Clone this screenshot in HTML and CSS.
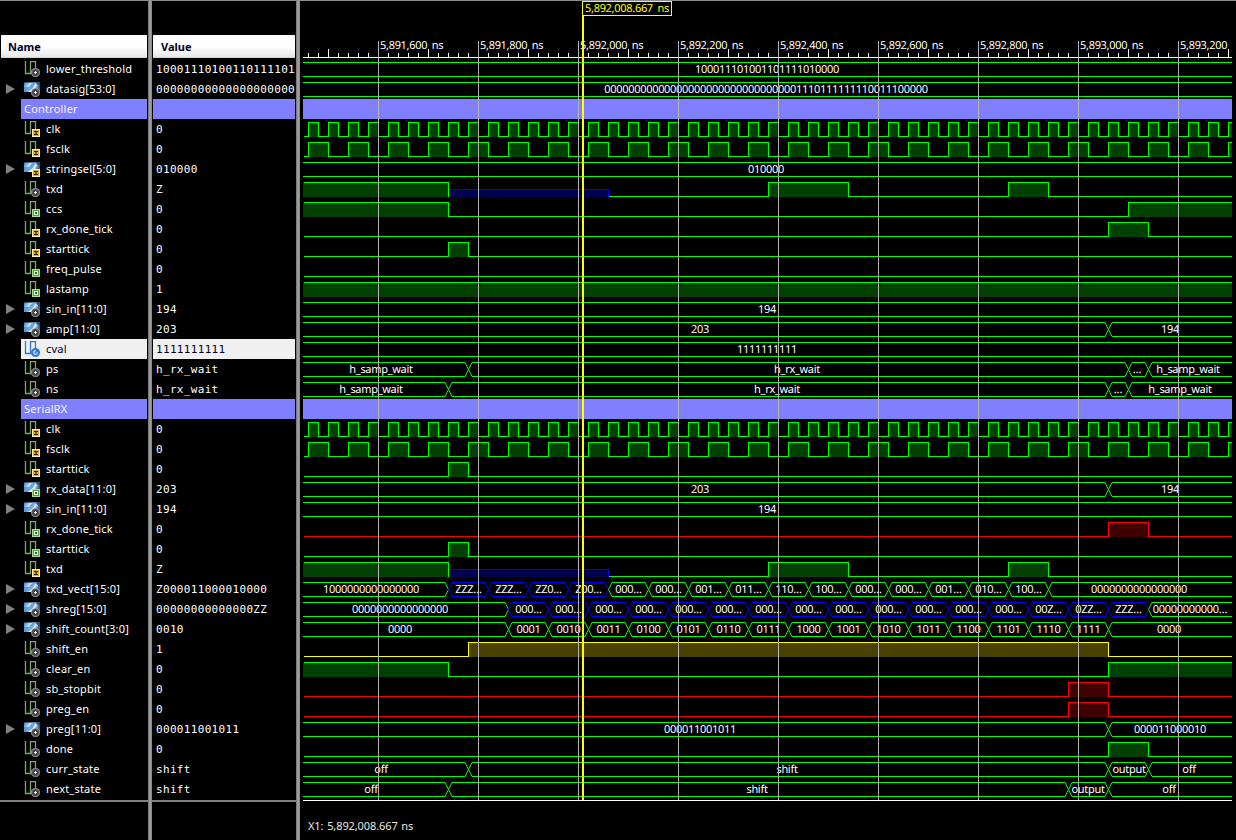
FILE: index.html
```html
<!DOCTYPE html>
<html lang="en">
<head>
<meta charset="utf-8">
<title>Waveform viewer</title>
<link rel="stylesheet" href="styles.css">
</head>
<body>
<svg class="defs" width="0" height="0" aria-hidden="true">
  <defs>
    <linearGradient id="bus-grad" x1="0" y1="0" x2="1" y2="0.3">
      <stop offset="0" stop-color="#2f7fd0"/>
      <stop offset="0.45" stop-color="#e8f4ff"/>
      <stop offset="0.7" stop-color="#ffffff"/>
      <stop offset="1" stop-color="#1f64b0"/>
    </linearGradient>
    <radialGradient id="gear-grad">
      <stop offset="0" stop-color="#ffffff"/>
      <stop offset="0.26" stop-color="#e8e8e8"/>
      <stop offset="0.32" stop-color="#303030"/>
      <stop offset="0.75" stop-color="#5c5c5c"/>
      <stop offset="1" stop-color="#b0b0b0"/>
    </radialGradient>
    <g id="wire"><path d="M1.5 0V12.5H6.5V0.5H11.5V10" fill="none" stroke="#7aa86a" stroke-width="1.3"/></g>
    <g id="buswire"><path d="M0 1.5H16V11H0Z" fill="url(#bus-grad)"/><path d="M0 6H5L8 1.5H12L9 7L4 11H0Z" fill="#3c8ddc" opacity="0.75"/><path d="M11 1.5H16V6L14 4Z" fill="#17528f"/></g>
    <g id="b-gear"><circle cx="11.5" cy="11.5" r="4.5" fill="url(#gear-grad)"/></g>
    <g id="b-i"><rect x="8" y="8" width="8" height="8" fill="#e5aa2a"/><rect x="8.5" y="8.5" width="7" height="7" fill="none" stroke="#fff0a8" stroke-width="1"/><rect x="10" y="10" width="4" height="1" fill="#222"/><rect x="11.5" y="10" width="1" height="4" fill="#222"/><rect x="10" y="13" width="4" height="1" fill="#222"/></g>
    <g id="b-o"><rect x="8" y="8" width="8" height="8" fill="#4f9f3a"/><rect x="8.5" y="8.5" width="7" height="7" fill="none" stroke="#a8e090" stroke-width="1"/><rect x="10" y="10" width="4" height="4" fill="#e8ffe0"/><rect x="11" y="11" width="2" height="2" fill="#2c6a20"/></g>
    <g id="b-c"><circle cx="11.5" cy="11.5" r="4.5" fill="#2f78d8"/><circle cx="11.5" cy="11.5" r="1.8" fill="none" stroke="#fff" stroke-width="1.1" stroke-dasharray="8 3"/></g>
    <symbol id="s-gear" viewBox="0 0 16 16"><use href="#wire"/><use href="#b-gear"/></symbol>
    <symbol id="s-i" viewBox="0 0 16 16"><use href="#wire"/><use href="#b-i"/></symbol>
    <symbol id="s-o" viewBox="0 0 16 16"><use href="#wire"/><use href="#b-o"/></symbol>
    <symbol id="s-c" viewBox="0 0 16 16"><path d="M1.5 0V12.5H6.5V0.5H11.5V10" fill="none" stroke="#2f78c8" stroke-width="1.3"/><use href="#b-c"/></symbol>
    <symbol id="v-gear" viewBox="0 0 16 16"><use href="#buswire"/><use href="#b-gear"/></symbol>
    <symbol id="v-i" viewBox="0 0 16 16"><use href="#buswire"/><use href="#b-i"/></symbol>
    <symbol id="v-o" viewBox="0 0 16 16"><use href="#buswire"/><use href="#b-o"/></symbol>
  </defs>
</svg>

<main class="viewer">
  <section class="pane name-pane">
    <header class="col-head">Name</header>
    <ul class="rows">
      <li class="row"><svg class="ic"><use href="#s-gear"/></svg><span>lower_threshold</span></li>
      <li class="row"><i class="exp"></i><svg class="ic"><use href="#v-gear"/></svg><span>datasig[53:0]</span></li>
      <li class="row group"><span>Controller</span></li>
      <li class="row"><svg class="ic"><use href="#s-i"/></svg><span>clk</span></li>
      <li class="row"><svg class="ic"><use href="#s-i"/></svg><span>fsclk</span></li>
      <li class="row"><i class="exp"></i><svg class="ic"><use href="#v-i"/></svg><span>stringsel[5:0]</span></li>
      <li class="row"><svg class="ic"><use href="#s-gear"/></svg><span>txd</span></li>
      <li class="row"><svg class="ic"><use href="#s-o"/></svg><span>ccs</span></li>
      <li class="row"><svg class="ic"><use href="#s-i"/></svg><span>rx_done_tick</span></li>
      <li class="row"><svg class="ic"><use href="#s-i"/></svg><span>starttick</span></li>
      <li class="row"><svg class="ic"><use href="#s-o"/></svg><span>freq_pulse</span></li>
      <li class="row"><svg class="ic"><use href="#s-o"/></svg><span>lastamp</span></li>
      <li class="row"><i class="exp"></i><svg class="ic"><use href="#v-gear"/></svg><span>sin_in[11:0]</span></li>
      <li class="row"><i class="exp"></i><svg class="ic"><use href="#v-gear"/></svg><span>amp[11:0]</span></li>
      <li class="row selected"><svg class="ic"><use href="#s-c"/></svg><span>cval</span></li>
      <li class="row"><svg class="ic"><use href="#s-gear"/></svg><span>ps</span></li>
      <li class="row"><svg class="ic"><use href="#s-gear"/></svg><span>ns</span></li>
      <li class="row group"><span>SerialRX</span></li>
      <li class="row"><svg class="ic"><use href="#s-i"/></svg><span>clk</span></li>
      <li class="row"><svg class="ic"><use href="#s-i"/></svg><span>fsclk</span></li>
      <li class="row"><svg class="ic"><use href="#s-i"/></svg><span>starttick</span></li>
      <li class="row"><i class="exp"></i><svg class="ic"><use href="#v-o"/></svg><span>rx_data[11:0]</span></li>
      <li class="row"><i class="exp"></i><svg class="ic"><use href="#v-gear"/></svg><span>sin_in[11:0]</span></li>
      <li class="row"><svg class="ic"><use href="#s-o"/></svg><span>rx_done_tick</span></li>
      <li class="row"><svg class="ic"><use href="#s-o"/></svg><span>starttick</span></li>
      <li class="row"><svg class="ic"><use href="#s-i"/></svg><span>txd</span></li>
      <li class="row"><i class="exp"></i><svg class="ic"><use href="#v-gear"/></svg><span>txd_vect[15:0]</span></li>
      <li class="row"><i class="exp"></i><svg class="ic"><use href="#v-gear"/></svg><span>shreg[15:0]</span></li>
      <li class="row"><i class="exp"></i><svg class="ic"><use href="#v-gear"/></svg><span>shift_count[3:0]</span></li>
      <li class="row"><svg class="ic"><use href="#s-gear"/></svg><span>shift_en</span></li>
      <li class="row"><svg class="ic"><use href="#s-gear"/></svg><span>clear_en</span></li>
      <li class="row"><svg class="ic"><use href="#s-gear"/></svg><span>sb_stopbit</span></li>
      <li class="row"><svg class="ic"><use href="#s-gear"/></svg><span>preg_en</span></li>
      <li class="row"><i class="exp"></i><svg class="ic"><use href="#v-gear"/></svg><span>preg[11:0]</span></li>
      <li class="row"><svg class="ic"><use href="#s-gear"/></svg><span>done</span></li>
      <li class="row"><svg class="ic"><use href="#s-gear"/></svg><span>curr_state</span></li>
      <li class="row"><svg class="ic"><use href="#s-gear"/></svg><span>next_state</span></li>
    </ul>
    <div class="pane-foot"></div>
  </section>

  <div class="divider"></div>

  <section class="pane value-pane">
    <header class="col-head">Value</header>
    <ul class="rows">
      <li class="row"><span>10001110100110111101</span></li>
      <li class="row"><span>00000000000000000000</span></li>
      <li class="row group"></li>
      <li class="row"><span>0</span></li>
      <li class="row"><span>0</span></li>
      <li class="row"><span>010000</span></li>
      <li class="row"><span>Z</span></li>
      <li class="row"><span>0</span></li>
      <li class="row"><span>0</span></li>
      <li class="row"><span>0</span></li>
      <li class="row"><span>0</span></li>
      <li class="row"><span>1</span></li>
      <li class="row"><span>194</span></li>
      <li class="row"><span>203</span></li>
      <li class="row selected"><span>1111111111</span></li>
      <li class="row"><span>h_rx_wait</span></li>
      <li class="row"><span>h_rx_wait</span></li>
      <li class="row group"></li>
      <li class="row"><span>0</span></li>
      <li class="row"><span>0</span></li>
      <li class="row"><span>0</span></li>
      <li class="row"><span>203</span></li>
      <li class="row"><span>194</span></li>
      <li class="row"><span>0</span></li>
      <li class="row"><span>0</span></li>
      <li class="row"><span>Z</span></li>
      <li class="row"><span>Z000011000010000</span></li>
      <li class="row"><span>00000000000000ZZ</span></li>
      <li class="row"><span>0010</span></li>
      <li class="row"><span>1</span></li>
      <li class="row"><span>0</span></li>
      <li class="row"><span>0</span></li>
      <li class="row"><span>0</span></li>
      <li class="row"><span>000011001011</span></li>
      <li class="row"><span>0</span></li>
      <li class="row"><span>shift</span></li>
      <li class="row"><span>shift</span></li>
    </ul>
    <div class="pane-foot"></div>
  </section>

  <div class="divider"></div>

  <section class="pane wave-pane">
    <svg id="wave" class="wave" width="936" height="801" viewBox="300 0 936 801"></svg>
    <p class="cursor-readout">X1: 5,892,008.667 ns</p>
  </section>
</main>
<script src="script.js"></script>
</body>
</html>
```
FILE: styles.css
```css
* { box-sizing: border-box; }
html, body { margin: 0; padding: 0; background: #000; overflow: hidden; }
body { width: 1236px; height: 840px; font-family: "Noto Sans", "DejaVu Sans", sans-serif; font-size: 11px; color: #fff; }
.defs { position: absolute; }
.viewer { display: grid; grid-template-columns: 148px 4px 144px 4px 936px; height: 840px; }
.divider { background: linear-gradient(90deg, #6c6c6c, #a8a8a8 50%, #808080); }
.pane { border-top: 1px solid #8c8c8c; overflow: hidden; }
.col-head { margin: 34px 1px 1px; height: 23px; padding: 4px 0 0 7px; background: linear-gradient(#fff 50%, #e8e8e8); font-weight: 700; font-size: 11px; line-height: 16px; color: #00001e; border-bottom: 1px solid #d0d0d0; }
.rows { list-style: none; margin: 0; padding: 0; }
.row { height: 20px; line-height: 20px; display: flex; align-items: center; white-space: nowrap; overflow: hidden; position: relative; }
.name-pane .row { padding-left: 46px; letter-spacing: 0.2px; }
.name-pane .row.group, .name-pane .row.selected { margin: 0 1px 0 21px; }
.name-pane .row.group { padding-left: 3px; }
.name-pane .row.selected { padding-left: 25px; }
.ic { position: absolute; left: 24px; top: 2px; width: 16px; height: 16px; }
.selected .ic { left: 3px; }
.exp { position: absolute; left: 6px; top: 5px; width: 0; height: 0; border-left: 9px solid #808080; border-top: 5px solid transparent; border-bottom: 5px solid transparent; }
.value-pane .col-head { padding-left: 8px; }
.value-pane .row { margin: 0 1px; padding: 1px 0 0 3px; font-family: "DejaVu Sans Mono", monospace; font-size: 11px; letter-spacing: 0.33px; }
.group { background: #8080ff; color: #f4f4ff; }
.selected { background: #f0f0f0; color: #00001e; }
.pane-foot { margin-top: 1px; height: 2px; background: #808080; }
.wave { display: block; shape-rendering: crispEdges; }
.wave-pane { border-top: 1px solid #8c8c8c; }
.wave-pane .wave { margin-top: -1px; }
.cursor-readout { margin: 17px 0 0 8px; line-height: 16px; color: #e8e8e8; letter-spacing: -0.1px; word-spacing: 1px; }

.wave text { font-family: "Noto Sans", "DejaVu Sans", sans-serif; font-size: 11px; letter-spacing: -0.3px; fill: #fff; text-rendering: geometricPrecision; }
.wave text.tick-label, .wave text.cursor-label { word-spacing: 2px; }
.lab { text-anchor: middle; }
.fill { stroke: none; }
.line { fill: none; stroke-width: 1; }
.line.bus-line { shape-rendering: auto; }
.c-green.line { stroke: #00ff00; }
.c-green.fill { fill: #004000; }
.c-blue.line { stroke: #0000ff; }
.c-blue.fill { fill: #000050; }
.c-red.line { stroke: #ff0000; }
.c-red.fill { fill: #400000; }
.c-yellow.line { stroke: #ffff00; }
.c-yellow.fill { fill: #4a4000; }
.band { fill: #8080ff; }
.axis { fill: #fff; }
.grid { fill: #b4b4b4; }
.cursor { fill: #ffff00; }
.cursor-box { fill: #000; stroke: #ffff00; }
.wave text.cursor-label { fill: #ffff00; }
```
FILE: script.js
```js
// Draws the simulation traces. All x values are page pixels; rows are 20px tall from y=59.
var L = 303, R = 1232;
var svg = document.getElementById('wave');
var NS = 'http://www.w3.org/2000/svg';

function el(name, attrs, text, parent) {
  var n = document.createElementNS(NS, name);
  for (var k in attrs) n.setAttribute(k, attrs[k]);
  if (text != null) n.textContent = text;
  (parent || svg).appendChild(n);
  return n;
}
function clock(first, half) {
  var out = [];
  for (var x = first, v = 1; x < R; x += half, v = 1 - v) out.push([x, v]);
  return out;
}
function bits(start, edges) {
  // start level, then toggle at every edge
  var out = [[L, start]], v = start;
  edges.forEach(function (e) { v = 1 - v; out.push([e, v]); });
  return out;
}
function seq(a, n, step) {
  var o = [];
  for (var i = 0; i < n; i++) o.push(a + i * step);
  return o;
}

var txd = { t: 'bit', s: [[L, 1], [448, 'z'], [608, 0], [768, 1], [848, 0], [1008, 1], [1048, 0]] };
var clk = { t: 'bit', s: [[L, 0]].concat(clock(308, 10)) };
var fsclk = { t: 'bit', s: [[L, 0]].concat(clock(308, 20)) };
var tick = { t: 'bit', s: bits(0, [448, 468]) };

var zeros = ['000…', '000…', '000…', '000…', '000…', '000…', '000…', '000…', '000…', '000…', '000…', '000…', '000…'];
var shregSegs = [[L, '0000000000000000', 400]];
zeros.forEach(function (z, i) { shregSegs.push([508 + i * 40, z, null, 'blue']); });
shregSegs.push([1028, '00Z…', null, 'blue'], [1068, '0ZZ…', null, 'blue'], [1108, 'ZZZ…', null, 'blue'], [1148, '00000000000…', 1190]);

var counts = ['0001','0010','0011','0100','0101','0110','0111','1000','1001','1010','1011','1100','1101','1110','1111'];
var countSegs = [[L, '0000', 400]];
counts.forEach(function (c, i) { countSegs.push([508 + i * 40, c]); });
countSegs.push([1108, '0000', 1169]);

var vect = ['000…','000…','001…','011…','110…','100…','000…','000…','001…','010…','100…'];
var vectSegs = [[L, '1000000000000000', 371], [448, 'ZZZ…', null, 'blue'], [488, 'ZZZ…', null, 'blue'], [528, 'ZZ0…', null, 'blue'], [568, 'Z00…', null, 'blue']];
vect.forEach(function (v, i) { vectSegs.push([608 + i * 40, v]); });
vectSegs.push([1048, '0000000000000000', 1139]);

var rows = [
  { t: 'bus', s: [[L, '100011101001101111010000', 767]] },
  { t: 'bus', s: [[L, '000000000000000000000000000000001110111111110011100000', 766]] },
  { t: 'band' },
  clk, fsclk,
  { t: 'bus', s: [[L, '010000', 766]] },
  txd,
  { t: 'bit', s: bits(1, [448, 1128]) },
  { t: 'bit', s: bits(0, [1108, 1148]) },
  tick,
  { t: 'bit', s: bits(0, []) },
  { t: 'bit', s: bits(1, []) },
  { t: 'bus', s: [[L, '194', 767]] },
  { t: 'bus', s: [[L, '203', 700], [1108, '194', 1170]] },
  { t: 'bus', s: [[L, '1111111111', 767]] },
  { t: 'bus', s: [[L, 'h_samp_wait', 381], [468, 'h_rx_wait', 797], [1128, '…', 1137], [1148, 'h_samp_wait', 1188]] },
  { t: 'bus', s: [[L, 'h_samp_wait', 371], [448, 'h_rx_wait', 777], [1108, '…', 1118], [1128, 'h_samp_wait', 1180]] },
  { t: 'band' },
  clk, fsclk, tick,
  { t: 'bus', s: [[L, '203', 700], [1108, '194', 1170]] },
  { t: 'bus', s: [[L, '194', 767]] },
  { t: 'bit', c: 'red', s: bits(0, [1108, 1148]) },
  tick,
  txd,
  { t: 'bus', s: vectSegs },
  { t: 'bus', s: shregSegs },
  { t: 'bus', s: countSegs },
  { t: 'bit', c: 'yellow', s: bits(0, [468, 1108]) },
  { t: 'bit', s: bits(1, [448, 1108]) },
  { t: 'bit', c: 'red', s: bits(0, [1068, 1108]) },
  { t: 'bit', c: 'red', s: bits(0, [1068, 1108]) },
  { t: 'bus', s: [[L, '000011001011', 700], [1108, '000011000010', 1170]] },
  { t: 'bit', s: bits(0, [1108, 1148]) },
  { t: 'bus', s: [[L, 'off', 381], [468, 'shift', 787], [1108, 'output', 1129], [1148, 'off', 1189]] },
  { t: 'bus', s: [[L, 'off', 371], [448, 'shift', 757], [1068, 'output', 1088], [1108, 'off', 1169]] }
];

function drawBit(row, top) {
  var c = row.c || 'green';
  var segs = row.s;
  var hi = top + 3.5, lo = top + 17.5, zy = top + 10.5;
  var d = '', lastY = null;
  var zIndex = -1;
  segs.forEach(function (s, i) {
    var a = s[0], b = i + 1 < segs.length ? segs[i + 1][0] : R;
    if (a >= R) return;
    if (b > R) b = R;
    var y = s[1] === 'z' ? zy : (s[1] ? hi : lo);
    if (s[1] === 1) el('rect', { 'class': 'fill c-' + c, x: a, y: top + 3, width: b - a, height: 15 });
    if (s[1] === 'z') {
      el('rect', { 'class': 'fill c-blue', x: a, y: top + 10, width: b - a, height: 8 });
      zIndex = i;
      return;
    }
    var ax = a + 0.5, bx = b + 0.5;
    if (lastY !== null && lastY !== y && segs[i - 1][1] !== 'z') d += 'L' + ax + ' ' + lastY;
    d += (d === '' || segs[i - 1][1] === 'z' ? 'M' : 'L') + ax + ' ' + y + 'L' + (b === R ? b : bx) + ' ' + y;
    lastY = y;
  });
  el('path', { 'class': 'line c-' + c, d: d });
  if (zIndex >= 0) {
    var za = segs[zIndex][0] + 0.5, zb = segs[zIndex + 1][0] + 0.5;
    el('path', { 'class': 'line c-blue', d: 'M' + za + ' ' + zy + 'H' + zb + 'V' + lo });
    el('path', { 'class': 'line c-green', d: 'M' + za + ' ' + hi + 'V' + lo });
  }
}

function drawBus(row, top) {
  var segs = row.s, y1 = top + 3.5, y2 = top + 17.5, m = top + 10.5, k = 3.5;
  segs.forEach(function (s, i) {
    var a = s[0], b = i + 1 < segs.length ? segs[i + 1][0] : R;
    var c = s[3] || 'green';
    var left = i === 0 ? 'M' + a + ' ' + y1 : 'M' + (a + 0.5) + ' ' + m + 'L' + (a + 0.5 + k) + ' ' + y1;
    var right = i === segs.length - 1 ? 'L' + b + ' ' + y1 + 'M' + b + ' ' + y2 : 'L' + (b + 0.5 - k) + ' ' + y1 + 'L' + (b + 0.5) + ' ' + m + 'L' + (b + 0.5 - k) + ' ' + y2;
    var close = i === 0 ? 'L' + a + ' ' + y2 : 'L' + (a + 0.5 + k) + ' ' + y2 + 'L' + (a + 0.5) + ' ' + m;
    el('path', { 'class': 'line bus-line c-' + c, d: left + right + close });
    var cx = s[2] != null ? s[2] : (a + b) / 2 + 0.5;
    el('text', { 'class': 'lab', x: cx, y: top + 14 }, s[1], clipGroup);
  });
}

// clip so labels stop at the right edge of the trace area
var defs = el('defs', {});
var clip = el('clipPath', { id: 'trace-clip' }, null, defs);
el('rect', { x: 300, y: 0, width: 932, height: 801 }, null, clip);
var clipGroup = el('g', { 'clip-path': 'url(#trace-clip)' });

rows.forEach(function (row, i) {
  var top = 59 + i * 20;
  if (row.t === 'band') el('rect', { 'class': 'band', x: L, y: top, width: R - L, height: 20 });
  else if (row.t === 'bit') drawBit(row, top);
  else drawBus(row, top);
});

// labels were drawn into the clip group before the traces: bring them on top
svg.appendChild(clipGroup);

// time axis
el('rect', { 'class': 'axis', x: L, y: 57, width: R - L, height: 1 });
seq(308, 93, 10).forEach(function (x) {
  if ((x - 378) % 100 === 0) return;
  var tall = (x - 328) % 100 === 0;
  el('rect', { 'class': 'axis', x: x, y: tall ? 49 : 53, width: 1, height: tall ? 8 : 4 });
});
var labels = ['5,891,600 ns', '5,891,800 ns', '5,892,000 ns', '5,892,200 ns', '5,892,400 ns', '5,892,600 ns', '5,892,800 ns', '5,893,000 ns', '5,893,200 ns'];
labels.forEach(function (t, i) {
  el('text', { 'class': 'tick-label', x: 380 + i * 100, y: 49 }, t, clipGroup);
});
seq(378, 9, 100).forEach(function (x) {
  el('rect', { 'class': 'grid', x: x, y: 41, width: 1, height: 759 });
});
el('rect', { 'class': 'axis', x: L, y: 800, width: R - L, height: 1 });

// cursor
el('rect', { 'class': 'cursor', x: 582, y: 16, width: 2, height: 784 });
el('rect', { 'class': 'cursor-box', x: 582.5, y: 1.5, width: 89, height: 14 });
el('text', { 'class': 'cursor-label', x: 585, y: 12 }, '5,892,008.667 ns');
```
